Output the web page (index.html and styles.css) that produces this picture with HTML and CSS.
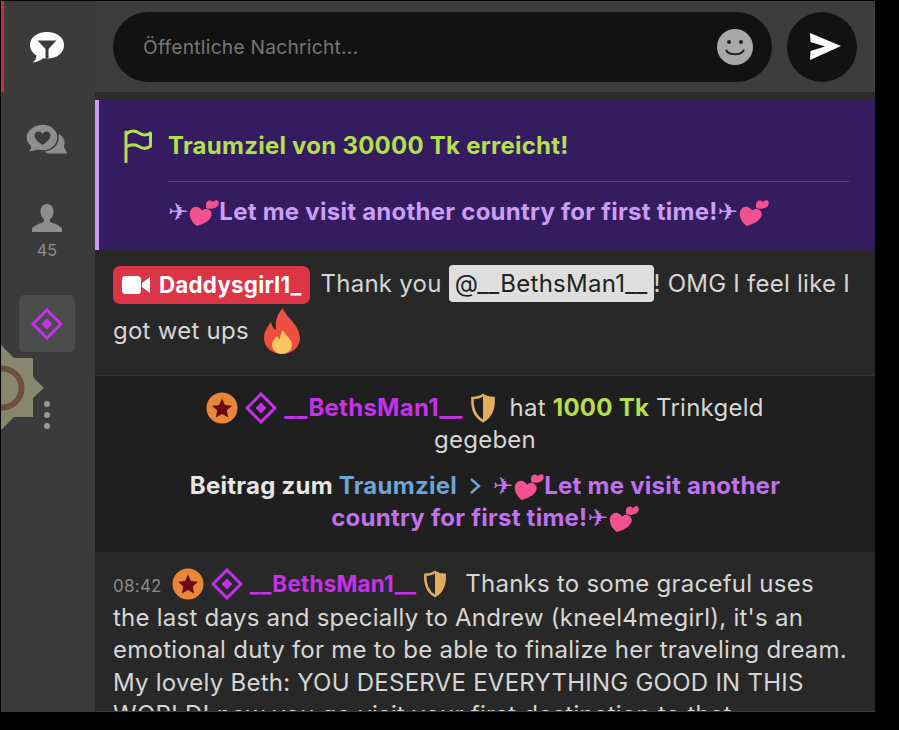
FILE: index.html
```html
<!DOCTYPE html>
<html lang="de">
<head>
  <meta charset="UTF-8">
  <meta name="viewport" content="width=device-width, initial-scale=1">
  <title>Chat</title>
  <link rel="stylesheet" href="styles.css">
</head>
<body>

  <svg class="sprite" width="0" height="0">
    <symbol id="diamond" viewBox="0 0 32 32">
      <path d="M16 2 30 16 16 30 2 16Z" fill="none" stroke="#c930ee" stroke-width="3"/>
      <path d="M16 10.500 21.500 16 16 21.500 10.500 16Z" fill="#c930ee"/>
    </symbol>
    <symbol id="star" viewBox="0 0 32 32">
      <circle cx="16" cy="16" r="15.500" fill="#e8873a"/>
      <path d="M16 6.500 19 13 26 13.800 20.800 18.600 22.200 25.600 16 22 9.800 25.600 11.200 18.600 6 13.800 13 13Z" fill="#6b0a14"/>
    </symbol>
    <symbol id="shield" viewBox="0 0 26 30">
      <path d="M13 2C9.500 4.500 6 5 2.500 5 2 14 4 23 13 28 22 23 24 14 23.500 5 20 5 16.500 4.500 13 2Z" fill="none" stroke="#e2ae5e" stroke-width="2.600"/>
      <path d="M13 2C16.500 4.500 20 5 23.500 5 24 14 22 23 13 28Z" fill="#e2ae5e"/>
    </symbol>
    <symbol id="hearts" viewBox="0 0 32 32">
      <path d="M9 31C4 27 1 21.500 2 16.500 3 12 7 10 10.500 11.500 12.500 12.300 13.800 13.500 14.500 15 16 13.500 18 13 20 13.500 24 14.500 25.500 18 24 21.500 21.500 26.500 15 29.500 9 31Z" fill="#f2508f"/>
      <path d="M19 13C18 9.500 18.500 6 21 5 23 4.300 24.800 5 25.700 6.500 26.800 4.800 28.500 3.800 30 4.500 32 5.500 32.300 8 31 10 29 12.800 24.500 13.500 19 13Z" fill="#f2508f"/>
    </symbol>
  </svg>

  <div class="app">
    <nav class="sidebar">
      <div class="tab tab-active">
        <svg class="tab-icon" viewBox="0 0 36 32" width="36" height="32">
          <path d="M18 1C8 1 1 6.500 1 14c0 4.500 2.500 8.200 6.500 10.500C7.500 27 6.500 29.500 3.500 31.500 8 31 11.500 29.500 14 27.300 15.500 27.500 16.800 27.600 18 27.600 28 27.600 35 22 35 14 35 6.500 28 1 18 1Z" fill="#fff"/>
          <path d="M8.500 9.500H27.500L19.500 18V27.600H16.500V18Z" fill="#3b3b3b"/>
        </svg>
      </div>
      <div class="tab tab-plain">
        <svg viewBox="0 0 42 32" width="42" height="32">
          <path d="M29 9C35 9.500 41 16 38 22 38.500 25 40 27 41.500 29.500H24C22 29.500 20 29 19 28Z" fill="#8e8e8e"/>
          <path d="M17 0C25 0 32 6 32 13.500 32 21 25 27 17 27 15 27 13.500 26.700 12 26.300 8 27.800 4 28.300 0.500 28.300 3 26.500 4.500 24.500 4.500 22.500 1.500 20 0 17 0 13.500 0 6 8 0 17 0Z" fill="#8e8e8e" stroke="#3b3b3b" stroke-width="1.500"/>
          <path d="M16.500 21C12 17.800 8.500 15 8.500 11.500 8.500 9 10.500 7.500 12.500 7.500 14.200 7.500 15.600 8.400 16.500 10 17.400 8.400 18.800 7.500 20.500 7.500 22.500 7.500 24.500 9 24.500 11.500 24.500 15 21 17.800 16.500 21Z" fill="#3b3b3b"/>
        </svg>
      </div>
      <div class="tab-user">
        <svg viewBox="0 0 30 28" width="30" height="28">
          <path d="M15 0C19 0 21.500 3 21.500 7.500 21.500 11 20 14 18 15.500V18C22 19.500 28 21 30 25V28H0V25C2 21 8 19.500 12 18V15.500C10 14 8.500 11 8.500 7.500 8.500 3 11 0 15 0Z" fill="#8e8e8e"/>
        </svg>
        <span class="user-count">45</span>
      </div>
      <div class="tab-box">
        <svg width="32" height="32"><use href="#diamond"/></svg>
      </div>
      <div class="dots"><i></i><i></i><i></i></div>
      <!-- halb verdecktes Zahnrad -->
      <svg class="gear" viewBox="0 0 45 86" width="45" height="86">
        <path d="M0 0 13 13H32V32L43 43 32 53V72H13L0 85Z" fill="#87876f"/>
        <circle cx="1" cy="43" r="19.500" fill="none" stroke="#70503c" stroke-width="6"/>
      </svg>
    </nav>

    <main class="content">
      <div class="composer">
        <div class="input-pill">
          <span class="placeholder">Öffentliche Nachricht...</span>
          <svg viewBox="0 0 36 36" width="36" height="36">
            <circle cx="18" cy="18" r="18" fill="#a9a9a9"/>
            <circle cx="12" cy="13" r="2" fill="#222"/>
            <circle cx="24" cy="13" r="2" fill="#222"/>
            <path d="M9.500 21.500C12 26.500 24 26.500 26.500 21.500" fill="none" stroke="#222" stroke-width="2" stroke-linecap="round"/>
          </svg>
        </div>
        <button class="send">
          <svg viewBox="0 0 32 32" width="32" height="32">
            <path d="M1 2 32 15 1 29 1.500 20 16 15.500 1.500 11Z" fill="#fff"/>
          </svg>
        </button>
      </div>

      <section class="goal">
        <div class="goal-head">
          <svg viewBox="0 0 30 34" width="30" height="34">
            <path d="M3 33V3M3 5C8 1 13 2 16 4 20 6.500 24 6.500 27.500 4V17C24 20 20 20 16 17.500 12 15 8 15 3 18" fill="none" stroke="#b4e04c" stroke-width="3" stroke-linecap="round" stroke-linejoin="round"/>
          </svg>
          <span class="goal-title">Traumziel von 30000 Tk erreicht!</span>
        </div>
        <div class="goal-text">
          <span class="plane">✈</span><svg class="emoji"><use href="#hearts"/></svg>Let me visit another country for first time!<span class="plane">✈</span><svg class="emoji"><use href="#hearts"/></svg>
        </div>
      </section>

      <article class="msg msg-cam">
        <span class="cam-name">
          <svg viewBox="0 0 28 20" width="28" height="20">
            <rect x="0" y="1" width="19" height="18" rx="3.500" fill="#fff"/>
            <path d="M20 8 28 2V18L20 12Z" fill="#fff"/>
          </svg>
          Daddysgirl1_
        </span>
        Thank you <span class="mention">@__BethsMan1__</span>! OMG I feel like I got wet ups
        <svg class="fire" viewBox="0 0 38 46" width="38" height="46">
          <path d="M20 0C22 9 36 15 37 30 37 39 29 46 19 46 9 46 1 39 1 30 1 23 5 18 8 14 9 18 10.500 21 13 22 12 13 14 6 20 0Z" fill="#ef4f3f"/>
          <path d="M20 22C21 27 29 30 29 37 29 42 24 46 19 46 14 46 9 42 9 37 9 33 12 31 14 28 15 30 16 31 17 31 17 28 18 25 20 22Z" fill="#fbc561"/>
        </svg>
      </article>

      <article class="tip">
        <p class="tip-line">
          <svg class="badge"><use href="#star"/></svg>
          <svg class="badge"><use href="#diamond"/></svg>
          <strong class="user-name">__BethsMan1__</strong>
          <svg class="shield"><use href="#shield"/></svg>
          hat <strong class="amount">1000 Tk</strong> Trinkgeld gegeben
        </p>
        <p class="tip-goal">
          Beitrag zum <span class="goal-link">Traumziel</span>
          <svg class="chevron" viewBox="0 0 14 20" width="14" height="20"><path d="M3 3 11 10 3 17" fill="none" stroke="#6ea4d8" stroke-width="2.400"/></svg>
          <span class="goal-name"><span class="plane">✈</span><svg class="emoji"><use href="#hearts"/></svg>Let me visit another country for first time!<span class="plane">✈</span><svg class="emoji"><use href="#hearts"/></svg></span>
        </p>
      </article>

      <article class="msg msg-last">
        <span class="time">08:42</span>
        <svg class="badge"><use href="#star"/></svg>
        <svg class="badge"><use href="#diamond"/></svg>
        <strong class="user-name">__BethsMan1__</strong>
        <svg class="shield"><use href="#shield"/></svg>
        Thanks to some graceful uses the last days and specially to Andrew (kneel4megirl), it's an emotional duty for me to be able to finalize her traveling dream. My lovely Beth: YOU DESERVE EVERYTHING GOOD IN THIS WORLD! now you go visit your first destination to that
      </article>
    </main>
  </div>

</body>
</html>
```

FILE: styles.css
```css
html, body {
  height: 100%;
}

body {
  margin: 0;
  background-color: #000;
  font-family: "Inter", "Liberation Sans", sans-serif;
  font-size: 24px;
  letter-spacing: 0.25px;
  color: #d6d6d6;
  overflow: hidden;
}

.sprite {
  display: block;
}

.app {
  display: flex;
  box-sizing: border-box;
  width: 874px;
  height: 711px;
  margin: 1px 0 0 1px;
  overflow: hidden;
  background-color: #282828;
  border-bottom: 1px solid #3a3d2a;
}

/* sidebar */
.sidebar {
  position: relative;
  flex: 0 0 94px;
  box-sizing: border-box;
  display: flex;
  flex-direction: column;
  align-items: center;
  padding-right: 2px;
  background-color: #3b3b3b;
}

.tab {
  display: flex;
  align-items: center;
  justify-content: center;
  width: 100%;
  box-sizing: border-box;
}

.tab-active {
  height: 91px;
  border-left: 3px solid #c22f3a;
  padding-right: 3px;
}

.tab-plain {
  height: 94px;
  padding-top: 1px;
}

.tab-user {
  display: flex;
  flex-direction: column;
  align-items: center;
  gap: 8px;
  margin-top: 18px;
}

.user-count {
  font-size: 16px;
  line-height: 20px;
  color: #8e8e8e;
}

.tab-box {
  display: flex;
  align-items: center;
  justify-content: center;
  flex: 0 0 57px;
  width: 56px;
  margin-top: 35px;
  border-radius: 5px;
  background-color: #4b4b4b;
}

.dots {
  display: flex;
  flex-direction: column;
  gap: 5px;
  margin-top: 49px;
}

.dots i {
  width: 6px;
  height: 6px;
  border-radius: 50%;
  background-color: #9a9a9a;
}

.gear {
  position: absolute;
  left: 0;
  top: 344px;
}

/* right side */
.content {
  flex: 1;
  min-width: 0;
  display: flex;
  flex-direction: column;
}

.composer {
  flex: 0 0 99px;
  display: flex;
  gap: 15px;
  box-sizing: border-box;
  padding: 11px 18px 0;
  background-color: #3d3d3d;
  border-bottom: 8px solid #2c2c2c;
}

.input-pill {
  flex: 1;
  display: flex;
  align-items: center;
  justify-content: space-between;
  height: 70px;
  padding: 0 19px 0 30px;
  border-radius: 35px;
  background-color: #121212;
}

.placeholder {
  font-size: 19.200px;
  color: #777;
}

.send {
  flex: 0 0 70px;
  display: flex;
  align-items: center;
  justify-content: center;
  height: 70px;
  padding: 0 0 0 6px;
  border: none;
  border-radius: 50%;
  background-color: #121212;
}

.goal {
  flex: 0 0 auto;
  box-sizing: border-box;
  height: 150px;
  padding: 29px 26px 0 24px;
  border-left: 4px solid #c69cf4;
  background-color: #351c61;
  font-weight: 700;
}

.goal-head {
  display: flex;
  align-items: center;
  gap: 15px;
}

.goal-title {
  color: #b4e04c;
  font-size: 24px;
  padding-bottom: 2px;
}

.goal-text {
  margin: 18px 0 0 45px;
  padding-top: 14px;
  border-top: 1px solid #5c4390;
  color: #c99ff6;
  font-size: 24px;
  line-height: 32px;
  white-space: nowrap;
}

.plane {
  font-family: "DejaVu Sans", sans-serif;
  font-weight: 400;
}

.emoji {
  width: 31px;
  height: 31px;
  vertical-align: -7px;
}

.msg {
  flex: 0 0 auto;
  box-sizing: border-box;
  padding: 0 18px;
  line-height: 47px;
  background-color: #282828;
}

.msg-cam {
  height: 126px;
  padding-top: 10px;
  border-bottom: 1px solid #343434;
}

.cam-name {
  display: inline-flex;
  align-items: center;
  gap: 9px;
  height: 38px;
  padding: 0 8px 0 9px;
  margin-right: 4px;
  border-radius: 7px;
  background-color: #dc3545;
  color: #fff;
  font-size: 22.300px;
  font-weight: 700;
  line-height: 38px;
  vertical-align: -3px;
}

.mention {
  padding: 4px 6px;
  border-radius: 4px;
  background-color: #dedede;
  color: #222;
}

.fire {
  vertical-align: -15px;
  margin-left: 7px;
}

.tip {
  flex: 0 0 auto;
  box-sizing: border-box;
  height: 176px;
  padding: 16px 90px 0;
  background-color: #1f1f1f;
  text-align: center;
  line-height: 32px;
}

.tip-line, .tip-goal {
  margin: 0;
}

.tip-goal {
  margin-top: 14px;
  font-weight: 700;
  color: #e6e6e6;
}

.badge {
  width: 32px;
  height: 32px;
  vertical-align: -8px;
}

.shield {
  width: 26px;
  height: 30px;
  vertical-align: -7px;
  margin-right: 7px;
}

.user-name {
  color: #c930ee;
}

.amount {
  color: #b4e04c;
}

.goal-link {
  color: #6ea4d8;
}

.chevron {
  vertical-align: -2px;
  margin: 0 5px;
}

.goal-name {
  color: #c071f0;
}

.msg-last {
  padding-top: 15.500px;
  line-height: 32.400px;
}

.msg-last .user-name {
  font-size: 22.400px;
}

.msg-last .shield {
  width: 24px;
  margin-right: 11px;
}

.time {
  font-size: 17px;
  color: #8a8a8a;
  margin-right: 3px;
}
```
